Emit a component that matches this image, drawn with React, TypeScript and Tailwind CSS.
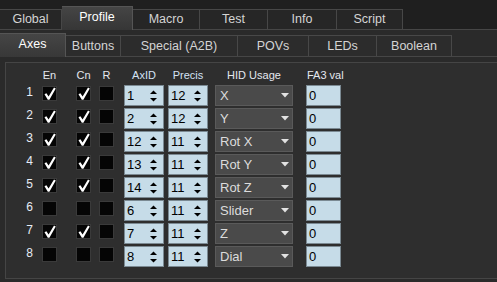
import React from 'react';

const topTabs = [
  { label: 'Global', w: 'w-[62px]' },
  { label: 'Profile', w: 'w-[71px]', active: true },
  { label: 'Macro', w: 'w-[67px]' },
  { label: 'Test', w: 'w-[68px]' },
  { label: 'Info', w: 'w-[69px]' },
  { label: 'Script', w: 'w-[66px]' },
];

const subTabs = [
  { label: 'Axes', w: 'w-[66px]', active: true },
  { label: 'Buttons', w: 'w-[55px]' },
  { label: 'Special (A2B)', w: 'w-[117px]' },
  { label: 'POVs', w: 'w-[71px]' },
  { label: 'LEDs', w: 'w-[68px]' },
  { label: 'Boolean', w: 'w-[75px]' },
];

const axes = [
  { n: 1, en: true, cn: true, id: 1, prec: 12, hid: 'X' },
  { n: 2, en: true, cn: true, id: 2, prec: 12, hid: 'Y' },
  { n: 3, en: true, cn: true, id: 12, prec: 11, hid: 'Rot X' },
  { n: 4, en: true, cn: true, id: 13, prec: 11, hid: 'Rot Y' },
  { n: 5, en: true, cn: true, id: 14, prec: 11, hid: 'Rot Z' },
  { n: 6, en: false, cn: false, id: 6, prec: 11, hid: 'Slider' },
  { n: 7, en: true, cn: true, id: 7, prec: 11, hid: 'Z' },
  { n: 8, en: false, cn: false, id: 8, prec: 11, hid: 'Dial' },
];

const Check = ({ on }: { on: boolean }) => (
  <div className="mt-px w-[15px] h-[15px] bg-[#050505] border border-[#3a3a3a] flex items-center justify-center">
    {on && (
      <svg width="13" height="13" viewBox="0 0 13 13">
        <path d="M1.5 7.2 L3.4 6.3 L5.6 9.6 L11 0.6 L12.8 1.6 L6.4 12.8 L4.8 12.8 Z" fill="#fff" />
      </svg>
    )}
  </div>
);

const Spinner = ({ value }: { value: number }) => (
  <div className="w-[40px] h-[21px] border border-[#7b8a93] bg-[#c6dce8] flex items-center justify-between pl-[2px] pr-[6px] text-[13px] text-black">
    <span>{value}</span>
    <svg width="7" height="12" viewBox="0 0 7 12">
      <path d="M0 4 L3.5 0.5 L7 4 Z" fill="#000" />
      <path d="M0 8 L7 8 L3.5 11.5 Z" fill="#000" />
    </svg>
  </div>
);

export default function App() {
  return (
    <div className="w-[497px] h-[282px] overflow-hidden bg-[#2a2a2a] font-['Liberation_Sans',Arial,sans-serif] select-none">
      {/* top tab row */}
      <div className="flex items-end h-[30px] bg-[#1f1f1f] border-b border-[#464646]">
        {topTabs.map((t) =>
          t.active ? (
            <div
              key={t.label}
              className={`${t.w} h-[24px] -mb-px relative flex items-center justify-center pb-[3px] bg-linear-to-b from-[#454545] to-[#363636] border-t border-r border-[#555] text-white text-[12.5px]`}
            >
              {t.label}
            </div>
          ) : (
            <div
              key={t.label}
              className={`${t.w} h-[20px] flex items-center justify-center bg-[#262626] border-t border-r border-[#474747] text-[#d4d4d4] text-[12.5px]`}
            >
              {t.label}
            </div>
          )
        )}
      </div>

      {/* sub tab row */}
      <div className="flex items-end h-[27px] bg-[#2a2a2a] border-b border-[#464646]">
        {subTabs.map((t) =>
          t.active ? (
            <div
              key={t.label}
              className={`${t.w} h-[24px] -mb-px relative flex items-center justify-center pb-[3px] bg-linear-to-b from-[#454545] to-[#383838] border-t border-r border-[#555] text-white text-[12.5px]`}
            >
              {t.label}
            </div>
          ) : (
            <div
              key={t.label}
              className={`${t.w} h-[21px] flex items-center justify-center bg-[#2c2c2c] border-t border-r border-[#484848] text-[#d4d4d4] text-[12.5px]`}
            >
              {t.label}
            </div>
          )
        )}
      </div>

      {/* body */}
      <div className="pl-[5px] pt-[5px]">
        <div className="h-[217px] bg-[#2e2e2e] border-t border-l border-b border-[#454545] pt-[2px]">
          <div className="flex items-center h-[20px] text-[11px] text-[#e4e8ee]">
            <div className="w-[27px]" />
            <div className="ml-[9px] w-[15px] text-center">En</div>
            <div className="ml-[19px] w-[15px] text-center">Cn</div>
            <div className="ml-[8px] w-[15px] text-center">R</div>
            <div className="ml-[10px] w-[40px] text-center text-[#d4e2f4]">AxID</div>
            <div className="ml-[4px] w-[40px] text-center text-[#d4e2f4]">Precis</div>
            <div className="ml-[7px] w-[78px] text-center">HID Usage</div>
            <div className="ml-[13px] w-[35px] pl-px whitespace-nowrap">FA3 val</div>
          </div>

          {axes.map((a) => (
            <div key={a.n} className="flex items-start h-[21px] mb-[2px]">
              <div className="w-[27px] h-[14px] leading-[14px] text-right text-[12px] text-[#e6ecf5]">{a.n}</div>
              <div className="ml-[9px]">
                <Check on={a.en} />
              </div>
              <div className="ml-[19px]">
                <Check on={a.cn} />
              </div>
              <div className="ml-[8px]">
                <Check on={false} />
              </div>
              <div className="ml-[10px]">
                <Spinner value={a.id} />
              </div>
              <div className="ml-[4px]">
                <Spinner value={a.prec} />
              </div>
              <div className="ml-[7px] w-[78px] h-[21px] border border-[#5a5a5a] bg-[#4a4a4a] flex items-center justify-between pl-[4px] pr-[3px] text-[13px] text-[#dcdcdc]">
                <span>{a.hid}</span>
                <svg width="8" height="5" viewBox="0 0 8 5">
                  <path d="M0 0 L8 0 L4 4.5 Z" fill="#e2e2e2" />
                </svg>
              </div>
              <div className="ml-[13px] w-[35px] h-[21px] border border-[#7b8a93] bg-[#c6dce8] flex items-center pl-[2px] text-[13px] text-black">
                0
              </div>
            </div>
          ))}
        </div>
      </div>
    </div>
  );
}
